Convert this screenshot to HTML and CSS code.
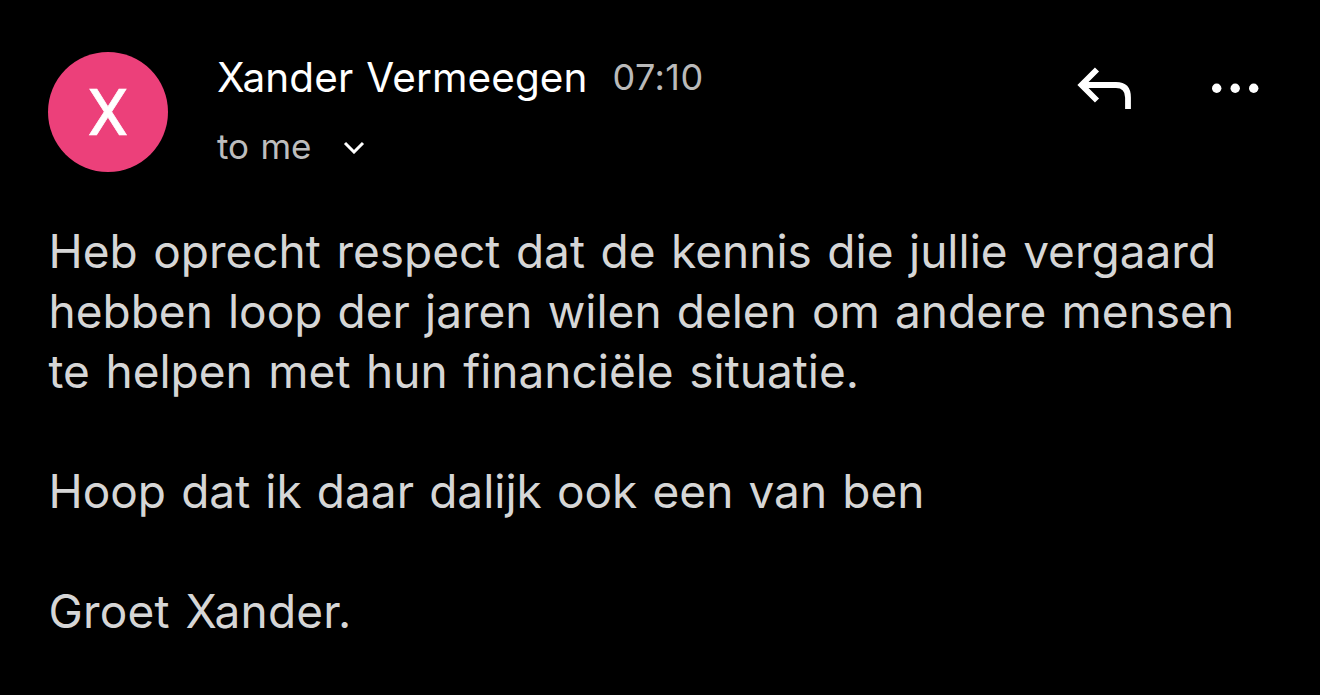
FILE: index.html
```html
<!DOCTYPE html>
<html lang="nl">
  <head>
    <meta charset="utf-8">
    <title>Mail</title>
    <link rel="stylesheet" href="styles.css">
  </head>
  <body>
    <div class="message">
      <header class="header">
        <div class="avatar">X</div>
        <div class="details">
          <div class="sender">
            <span class="name">Xander Vermeegen</span>
            <span class="time">07:10</span>
          </div>
          <div class="recipient">
            <span class="to">to me</span>
            <svg class="chevron" width="22" height="14" viewBox="0 0 22 14"><path d="M2 3L11 12L20 3" /></svg>
          </div>
        </div>
        <div class="actions">
          <svg class="reply" width="56" height="44" viewBox="0 0 56 44"><path d="M20 2.500L4.500 18L20 33.500M5 18H39Q51 18 51 30.500V42" /></svg>
          <svg class="more" width="48" height="12" viewBox="0 0 48 12"><circle cx="4.700" cy="6.300" r="4.700" /><circle cx="23.200" cy="6.300" r="4.700" /><circle cx="41.700" cy="6.300" r="4.700" /></svg>
        </div>
      </header>
      <div class="content">
        <p>Heb oprecht respect dat de kennis die jullie vergaard<br>
        <span class="tight">hebben loop der jaren wilen delen om andere mensen</span><br>
        te helpen met hun financiële situatie.</p>
        <p class="tight">Hoop dat ik daar dalijk ook een van ben</p>
        <p class="closing">Groet Xander.</p>
      </div>
    </div>
  </body>
</html>
```

FILE: styles.css
```css
body {
  margin: 0;
  background-color: #000;
  font-family: Inter, sans-serif;
  color: #d6d6d6;
}
.message {
  padding: 52px 48px 0;
}
.header {
  display: flex;
  height: 120px;
}
.avatar {
  width: 120px;
  height: 120px;
  border-radius: 50%;
  background-color: #ec407a;
  color: #fff;
  font-family: Roboto, sans-serif;
  font-size: 65px;
  line-height: 123px;
  text-align: center;
  -webkit-text-stroke: 0.6px #fff;
}
.details {
  margin-left: 49px;
}
.sender {
  display: flex;
  align-items: flex-start;
  height: 70px;
  line-height: 52px;
}
.name {
  color: #fff;
  font-size: 40.5px;
  letter-spacing: 0.1px;
  word-spacing: 1.5px;
}
.time {
  margin-left: 25px;
  color: #bababa;
  font-size: 36px;
  line-height: 50px;
  letter-spacing: 0.4px;
}
.recipient {
  display: flex;
  align-items: center;
  height: 50px;
  color: #bdbdbd;
  font-size: 35px;
  word-spacing: 1.5px;
}
.to {
  padding-bottom: 2px;
}
.chevron {
  margin-left: 31px;
}
.actions {
  display: flex;
  align-items: flex-start;
  margin-left: auto;
  margin-right: 12px;
}
.reply {
  margin-top: 15px;
}
.more {
  margin-top: 30px;
  margin-left: 79px;
}
.chevron path, .reply path {
  fill: none;
  stroke: #fff;
  stroke-width: 3;
}
.reply path {
  stroke-width: 5.8;
}
.more circle {
  fill: #fff;
}
.content {
  margin-top: 48.5px;
  padding-left: 0.5px;
  font-size: 46px;
  line-height: 60px;
  word-spacing: 2.6px;
}
.content p {
  margin: 0 0 60px;
  white-space: nowrap;
}
.content .tight {
  word-spacing: 2.2px;
}
.content .closing {
  letter-spacing: 0.2px;
}
```
